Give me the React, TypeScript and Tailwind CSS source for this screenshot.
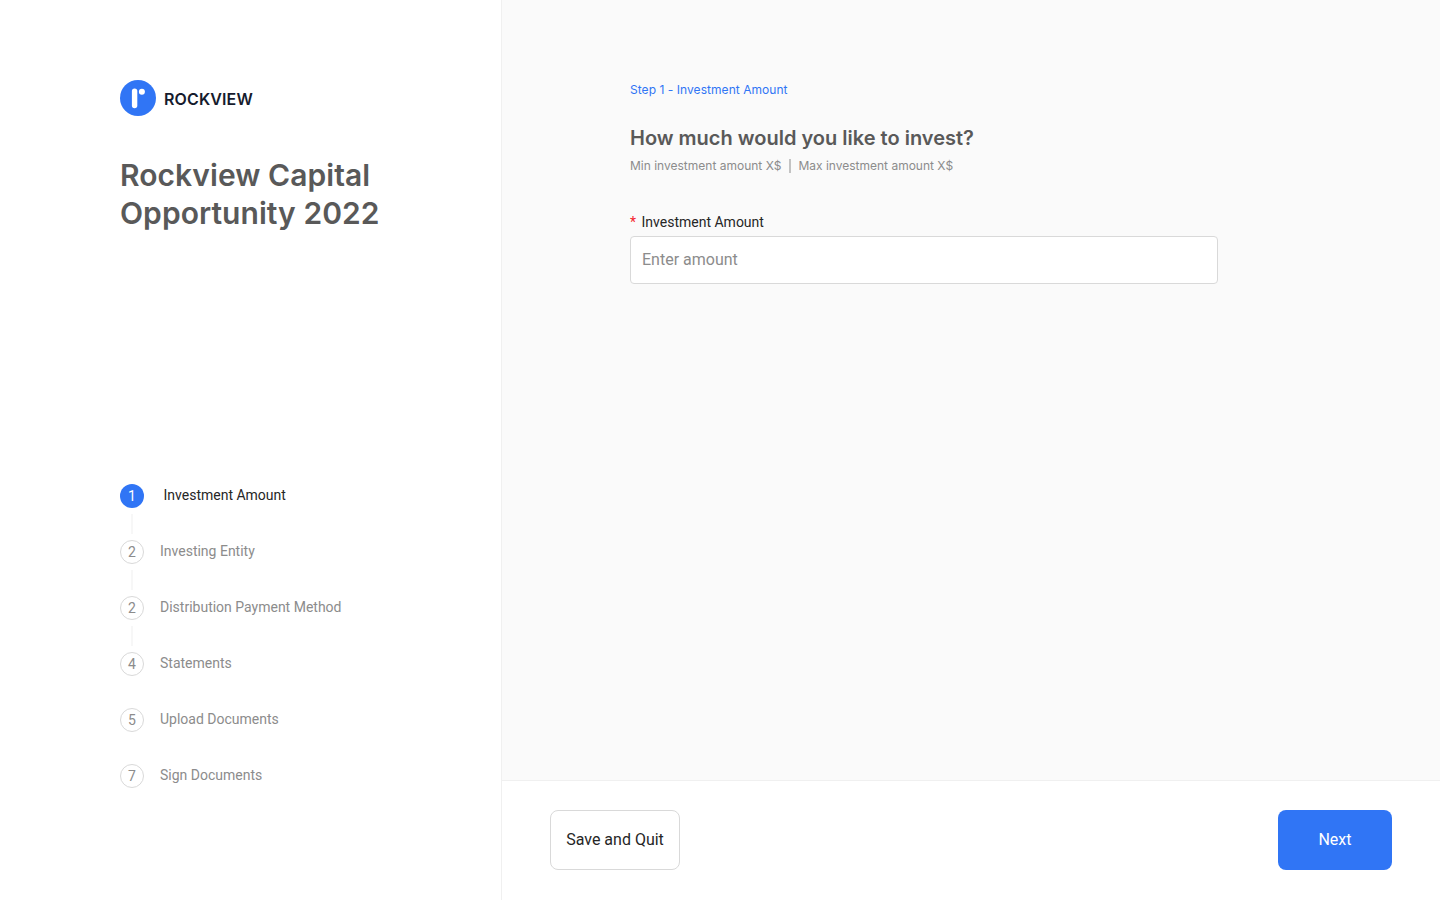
const steps = [
    { number: 1, label: "Investment Amount", line: true },
    { number: 2, label: "Investing Entity", line: true },
    { number: 2, label: "Distribution Payment Method", line: true },
    { number: 4, label: "Statements", line: false },
    { number: 5, label: "Upload Documents", line: false },
    { number: 7, label: "Sign Documents", line: false },
];

function Logo() {
    return (
        <div className="flex items-center gap-2">
            <svg width="36" height="36" viewBox="0 0 36 36" fill="none">
                <circle cx="18" cy="18" r="18" fill="#3075f5" />
                <rect x="11.9" y="8.4" width="5.4" height="19.8" rx="2.7" fill="white" />
                <circle cx="21.9" cy="11.8" r="3" fill="white" />
            </svg>
            <span className="mt-px font-[Inter] text-base leading-6 font-semibold tracking-[0.13px] text-[#161b2d]">
                ROCKVIEW
            </span>
        </div>
    );
}

export default function App() {
    return (
        <div className="flex h-screen overflow-hidden bg-white font-[Roboto,sans-serif]">
            <aside className="flex w-[502px] shrink-0 flex-col border-r border-[#f0f0f0] pt-20 pl-[120px]">
                <Logo />
                <h1 className="mt-10 h-[328px] font-[Inter] text-[30px] leading-[38px] font-semibold tracking-[0.05px] text-[#595959]">
                    Rockview Capital
                    <br />
                    Opportunity 2022
                </h1>
                <ol>
                    {steps.map((step, idx) => (
                        <li key={idx} className="flex h-14 items-start">
                            <div className="flex w-6 flex-col items-center gap-1.5">
                                <span
                                    className={
                                        idx === 0
                                            ? "flex size-6 items-center justify-center rounded-full bg-[#3075f5] text-sm text-white"
                                            : "flex size-6 items-center justify-center rounded-full border border-[#d9d9d9] text-sm text-[#8c8c8c]"
                                    }
                                >
                                    {step.number}
                                </span>
                                {step.line && <span className="h-5 w-0.5 bg-[#f7f7f7]" />}
                            </div>
                            <span
                                className={
                                    idx === 0
                                        ? "ml-[19.5px] text-sm leading-[22px] text-[#262626]"
                                        : "ml-4 text-sm leading-[22px] text-[#8c8c8c]"
                                }
                            >
                                {step.label}
                            </span>
                        </li>
                    ))}
                </ol>
            </aside>
            <main className="flex flex-1 flex-col bg-[#fafafa]">
                <section className="flex-1 pt-20 pl-32">
                    <p className="font-[Inter] text-xs leading-5 tracking-[0.05px] text-[#3075f5]">
                        Step 1 - Investment Amount
                    </p>
                    <h2 className="mt-6 font-[Inter] text-xl leading-7 font-semibold text-[#595959]">
                        How much would you like to invest?
                    </h2>
                    <div className="mt-1 flex items-center font-[Inter] text-xs leading-5 text-[#8c8c8c]">
                        <span>Min investment amount X$</span>
                        <span className="mx-[7.5px] h-[14px] w-0.5 bg-[#c3c3c3]" />
                        <span>Max investment amount X$</span>
                    </div>
                    <label htmlFor="amount" className="mt-[35px] flex gap-[5.5px] text-sm leading-[22px] text-[#262626]">
                        <span className="text-[#f5222d]">*</span>
                        Investment Amount
                    </label>
                    <input
                        id="amount"
                        placeholder="Enter amount"
                        className="mt-[3px] block h-12 w-[588px] rounded border border-[#d9d9d9] bg-white px-[11px] pb-0.5 text-base text-[#262626] placeholder:text-[#8c8c8c]"
                    />
                </section>
                <footer className="flex h-[120px] items-start justify-between border-t border-[#f0f0f0] bg-white px-12 pt-[29px]">
                    <button className="h-[60px] w-[130px] rounded-lg border border-[#d9d9d9] text-base text-[#262626]">
                        Save and Quit
                    </button>
                    <button className="h-[60px] w-[114px] rounded-lg bg-[#3075f5] text-base text-white">Next</button>
                </footer>
            </main>
        </div>
    );
}
